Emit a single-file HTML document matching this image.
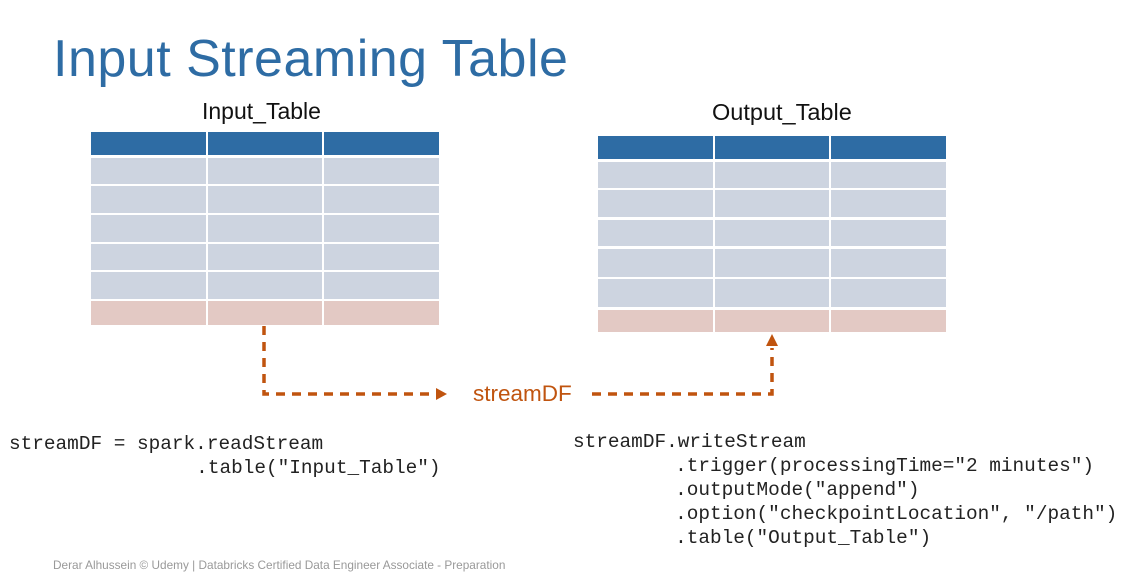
<!DOCTYPE html>
<html><head><meta charset="utf-8"><style>
body{margin:0;width:1135px;height:582px;background:#fff;position:relative;overflow:hidden;font-family:"Liberation Sans",sans-serif}
.a{position:absolute}
.t{color:#2e6ca4;font-size:52px;left:53px;top:29px;letter-spacing:0.5px}
.lbl{font-size:23px;color:#111}
.code{font-family:"Liberation Mono",monospace;font-size:19.4px;line-height:24px;color:#222;white-space:pre}
.foot{font-size:11.8px;color:#999;left:53px;top:558px}
</style></head><body>
<div class="a t">Input Streaming Table</div>
<div class="a lbl" style="left:202px;top:98px">Input_Table</div>
<div class="a lbl" style="left:712px;top:99px;font-size:23.5px">Output_Table</div>
<svg class="a" style="left:0;top:0" width="1135" height="582">
<rect x="91" y="132" width="348" height="23" fill="#2e6ca4"/>
<rect x="91" y="158" width="348" height="141" fill="#cdd4e0"/>
<rect x="91" y="301" width="348" height="24" fill="#e3c9c4"/>
<g fill="#fff"><rect x="206" y="132" width="2" height="194"/><rect x="322" y="132" width="2" height="194"/>
<rect x="91" y="184" width="348" height="2"/><rect x="91" y="213" width="348" height="2"/><rect x="91" y="242" width="348" height="2"/><rect x="91" y="270" width="348" height="2"/></g>
<rect x="598" y="136" width="348" height="23" fill="#2e6ca4"/>
<rect x="598" y="162" width="348" height="145" fill="#cdd4e0"/>
<rect x="598" y="310" width="348" height="22" fill="#e3c9c4"/>
<g fill="#fff"><rect x="713" y="136" width="2" height="196"/><rect x="829" y="136" width="2" height="196"/>
<rect x="598" y="188" width="348" height="2"/><rect x="598" y="217" width="348" height="3"/><rect x="598" y="246" width="348" height="3"/><rect x="598" y="277" width="348" height="2"/></g>
<g stroke="#c0540f" stroke-width="3.5" fill="none" stroke-dasharray="9,7" stroke-linecap="butt">
<path d="M264 326 V394 H436"/>
<path d="M592 394 H772 V348"/>
</g>
<path d="M436 388 L447 394 L436 400Z" fill="#c0540f"/>
<path d="M766 346 L772 334 L778 346Z" fill="#c0540f"/>
</svg>
<div class="a" style="left:473px;top:381px;font-size:22.5px;color:#c0540f">streamDF</div>
<div class="a code" style="left:9px;top:432px">streamDF = spark.readStream
<span style="margin-left:1px">                .table("Input_Table")</span></div>
<div class="a code" style="left:573px;top:430px">streamDF.writeStream
<span style="padding-left:9px">        .trigger(processingTime="2 minutes")</span>
<span style="padding-left:9px">        .outputMode("append")</span>
<span style="padding-left:9px">        .option("checkpointLocation", "/path")</span>
<span style="padding-left:9px">        .table("Output_Table")</span></div>
<div class="a foot">Derar Alhussein © Udemy | Databricks Certified Data Engineer Associate - Preparation</div>
</body></html>
